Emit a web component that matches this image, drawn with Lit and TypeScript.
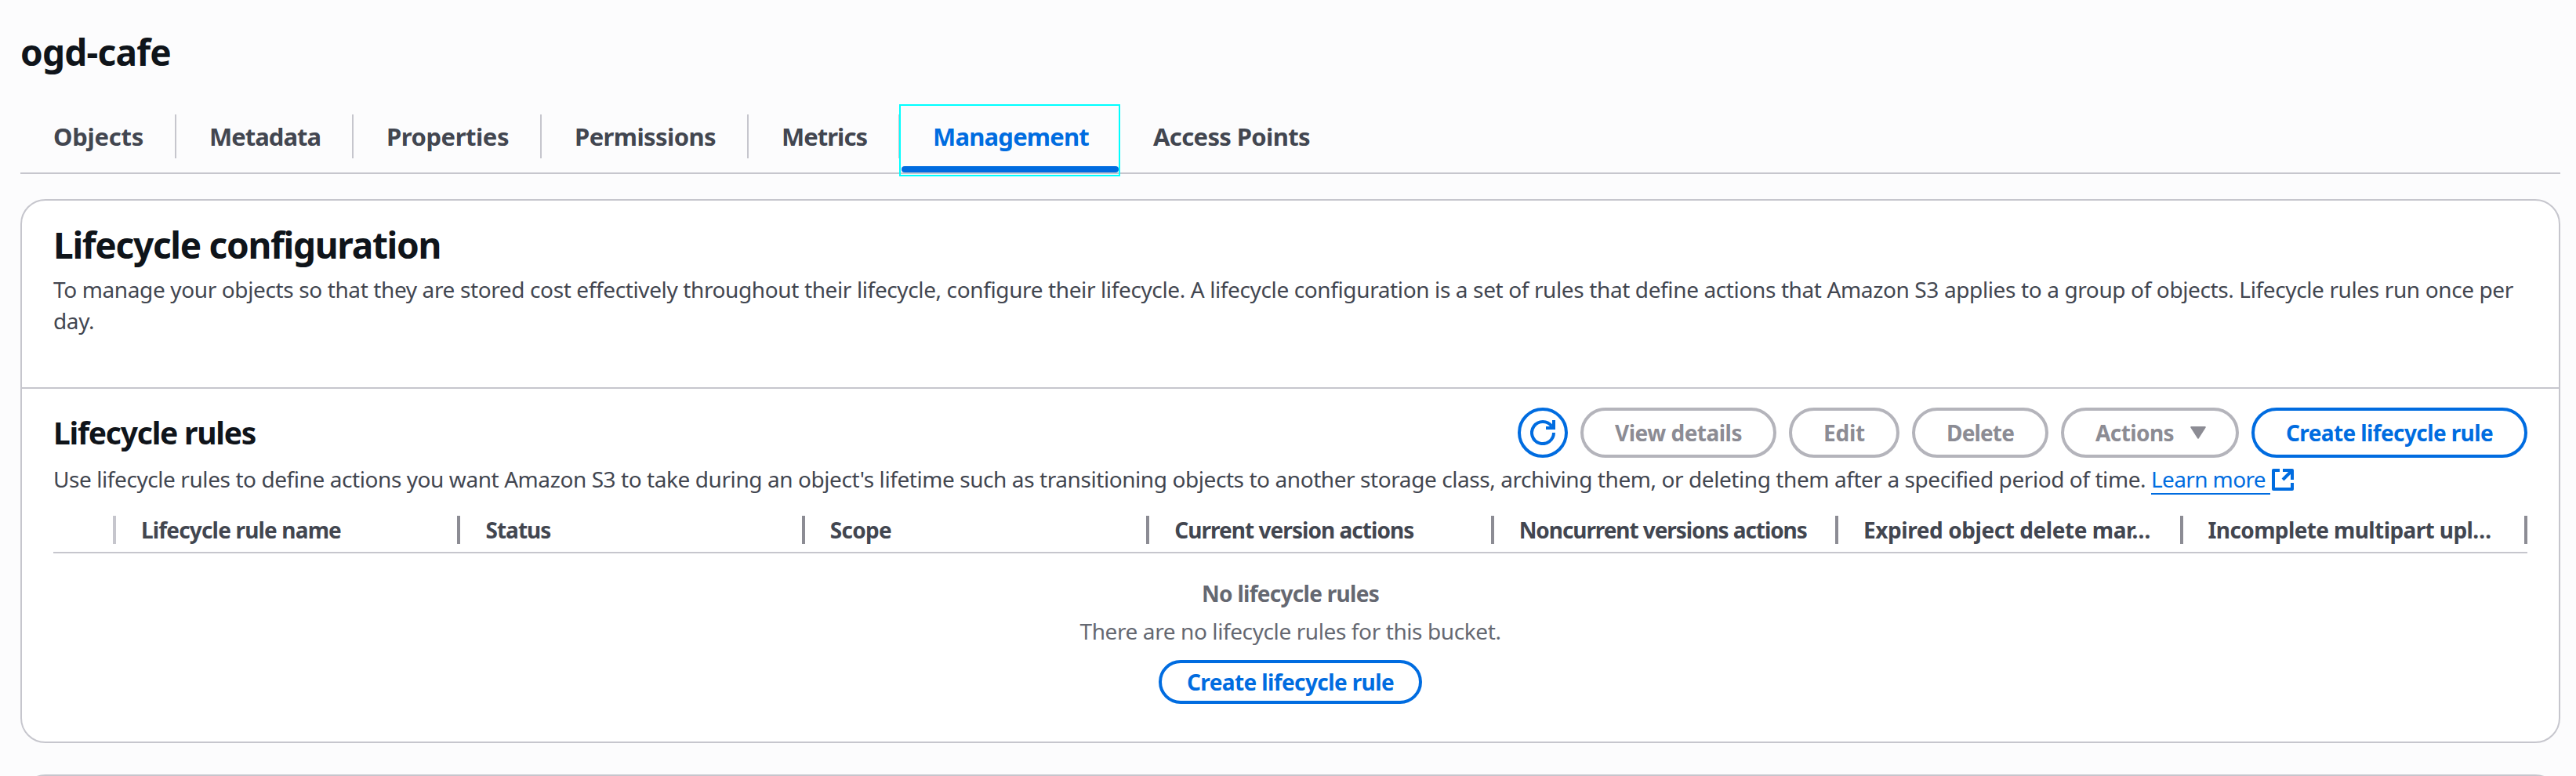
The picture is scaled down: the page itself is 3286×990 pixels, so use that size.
import { LitElement, html, css, svg, nothing } from 'lit';
import { customElement } from 'lit/decorators.js';
import { classMap } from 'lit/directives/class-map.js';

const FAMILY = '"Noto Sans", "Open Sans", sans-serif';
const BODY_WEIGHT = 450;
const ctx = document.createElement('canvas').getContext('2d')!;

/** Letter spacing that makes a text take up the given advance width. */
function spacing(text: string, weight: number, size: number, width: number): string {
  ctx.font = `${weight} ${size}px ${FAMILY}`;
  const natural = ctx.measureText(text).width;
  return `${((width - natural) / text.length).toFixed(3)}px`;
}

interface Label {
  text: string;
  width: number;
}

const TABS: Label[] = [
  { text: 'Objects', width: 115 },
  { text: 'Metadata', width: 142 },
  { text: 'Properties', width: 156 },
  { text: 'Permissions', width: 180 },
  { text: 'Metrics', width: 109 },
  { text: 'Management', width: 199 },
  { text: 'Access Points', width: 200 },
];

const COLUMNS: Label[] = [
  { text: 'Lifecycle rule name', width: 255 },
  { text: 'Status', width: 83 },
  { text: 'Scope', width: 78 },
  { text: 'Current version actions', width: 305 },
  { text: 'Noncurrent versions actions', width: 367 },
  { text: 'Expired object delete mar…', width: 366 },
  { text: 'Incomplete multipart upl…', width: 361 },
];

const BUTTONS: Label[] = [
  { text: 'View details', width: 162 },
  { text: 'Edit', width: 53 },
  { text: 'Delete', width: 86 },
];

const INTRO =
  'To manage your objects so that they are stored cost effectively throughout their lifecycle, configure their lifecycle. A lifecycle configuration is a set of rules that define actions that Amazon S3 applies to a group of objects. Lifecycle rules run once per';

const refreshIcon = svg`<svg width="32" height="32" viewBox="0 0 32 32" fill="none" stroke="currentColor" stroke-width="4">
  <path d="M30 16A14 14 0 1 1 27.4 7.9"/><path d="M30 0V10H20"/></svg>`;
const caretIcon = svg`<svg width="20" height="16" viewBox="0 0 20 16" fill="currentColor" stroke="currentColor" stroke-width="2" stroke-linejoin="round">
  <path d="M1.2 1H18.8L10 14.6Z"/></svg>`;
const externalIcon = svg`<svg width="28" height="28" viewBox="0 0 28 28" fill="none" stroke="currentColor" stroke-width="4" stroke-linejoin="round">
  <path d="M10 2H2V26H26V18"/><path d="M14 2H26V14"/><path d="M26 2L14 14"/></svg>`;

@customElement('app-root')
export class AppRoot extends LitElement {
  static styles = css`
    :host {
      display: block;
      box-sizing: border-box;
      height: 990px;
      overflow: hidden;
      padding: 36px 20px 0 26px;
      background: #fcfcfd;
      color: #424650;
      font: 450 28px/40px "Noto Sans", "Open Sans", sans-serif;
    }
    *, *::before, *::after { box-sizing: border-box; }
    h1, h2, h3, p { margin: 0; }
    svg { display: block; flex: none; }
    .label { display: block; white-space: nowrap; }
    h1, h2 { font-size: 46px; line-height: 60px; font-weight: 700; color: #0f141a; }
    h3 { font-size: 39px; line-height: 60px; font-weight: 700; color: #0f141a; }

    .tabs {
      display: flex;
      height: 94px;
      margin-top: 32px;
      border-bottom: 2px solid #c6c6cd;
    }
    .tab {
      position: relative;
      display: flex;
      align-items: center;
      height: 92px;
      font-size: 31px;
      font-weight: 700;
    }
    .tab .label { margin: 0 40px 0 42px; }
    .divider { width: 2px; height: 56px; background: #c6c6cd; }
    .active { color: #006ce0; }
    .active::before {
      content: '';
      position: absolute;
      left: 2px;
      right: 2px;
      bottom: 0;
      height: 8px;
      border-radius: 4px;
      background: #006ce0;
    }
    .active::after {
      content: '';
      position: absolute;
      inset: 5px 0 -5px -1px;
      border: 2px solid #00ffff;
    }

    .card {
      margin-top: 32px;
      border: 2px solid #c6c6cd;
      border-radius: 32px;
      background: #fff;
    }
    .intro { padding: 26px 40px 65px; border-bottom: 2px solid #c6c6cd; }
    .intro p { margin-top: 7px; }
    .rules { padding: 24px 40px 48px; }
    .bar { display: flex; align-items: center; justify-content: space-between; height: 64px; }
    .actions { display: flex; gap: 16px; }
    .btn {
      display: flex;
      align-items: center;
      height: 64px;
      padding: 0 40px 1px;
      border: 4px solid #006ce0;
      border-radius: 32px;
      background: #fff;
      color: #006ce0;
      font: inherit;
      font-weight: 700;
    }
    .btn.disabled { border-color: #b4b4bb; color: #8c8c94; }
    .btn.round { width: 64px; padding: 0; justify-content: center; }
    .btn.menu { gap: 21px; padding-right: 38px; }
    .btn.small { height: 56px; padding: 0 32px 1px; margin-top: 9px; }
    .hint { display: flex; margin-top: 7px; }
    .link { display: flex; color: #006ce0; }
    .link-text { width: 152px; height: 40px; border-bottom: 2px solid #006ce0; }
    .link svg { margin: 7px 0 0 2px; }

    .head {
      display: flex;
      height: 58px;
      margin-top: 17px;
      border-bottom: 2px solid #c6c6cd;
      font-weight: 700;
    }
    .cell {
      display: flex;
      flex: 1 1 0;
      align-items: center;
      justify-content: space-between;
      min-width: 0;
      padding-left: 32px;
    }
    .cell .label { padding-bottom: 1px; }
    .cell::after { content: ''; flex: none; width: 4px; height: 36px; background: #8c8c94; }
    .cell.select { flex: 0 0 80px; padding: 0; justify-content: flex-end; }
    .cell.select::after { background: #c6c6cd; }

    .empty {
      display: flex;
      flex-direction: column;
      align-items: center;
      gap: 8px;
      padding-top: 31px;
      color: #656871;
    }
    .strong { font-weight: 700; }
    .next { height: 200px; margin-top: 40px; }
  `;

  private label(text: string, width: number, weight = 700, size = 28) {
    return html`<span class="label" style="letter-spacing:${spacing(text, weight, size, width)};width:${width}px">${text}</span>`;
  }

  render() {
    return html`
      <h1>${this.label('ogd-cafe', 192, 700, 46)}</h1>
      <nav class="tabs">
        ${TABS.map((t, i) => {
          const active = t.text === 'Management';
          return html`<div class=${classMap({ tab: true, active })}>
            ${this.label(t.text, t.width, 700, 31)}
            ${active || i === TABS.length - 1 ? nothing : html`<span class="divider"></span>`}
          </div>`;
        })}
      </nav>
      <section class="card">
        <div class="intro">
          <h2>${this.label('Lifecycle configuration', 494, 700, 46)}</h2>
          <p style="letter-spacing:${spacing(INTRO, BODY_WEIGHT, 28, 3138)}">${INTRO} day.</p>
        </div>
        <div class="rules">
          <div class="bar">
            <h3>${this.label('Lifecycle rules', 258, 700, 39)}</h3>
            <div class="actions">
              <button class="btn round" aria-label="Refresh">${refreshIcon}</button>
              ${BUTTONS.map((b) => html`<button class="btn disabled">${this.label(b.text, b.width)}</button>`)}
              <button class="btn disabled menu">${this.label('Actions', 100)}${caretIcon}</button>
              <button class="btn">${this.label('Create lifecycle rule', 264)}</button>
            </div>
          </div>
          <div class="hint">
            ${this.label("Use lifecycle rules to define actions you want Amazon S3 to take during an object's lifetime such as transitioning objects to another storage class, archiving them, or deleting them after a specified period of time. ", 2676, BODY_WEIGHT)}
            <a class="link"><span class="link-text">${this.label('Learn more', 146, BODY_WEIGHT)}</span>${externalIcon}</a>
          </div>
          <div class="head">
            <div class="cell select"></div>
            ${COLUMNS.map((c) => html`<div class="cell">${this.label(c.text, c.width)}</div>`)}
          </div>
          <div class="empty">
            <div class="strong">${this.label('No lifecycle rules', 226)}</div>
            <div>${this.label('There are no lifecycle rules for this bucket.', 537, BODY_WEIGHT)}</div>
            <button class="btn small">${this.label('Create lifecycle rule', 264)}</button>
          </div>
        </div>
      </section>
      <section class="card next"></section>
    `;
  }
}
